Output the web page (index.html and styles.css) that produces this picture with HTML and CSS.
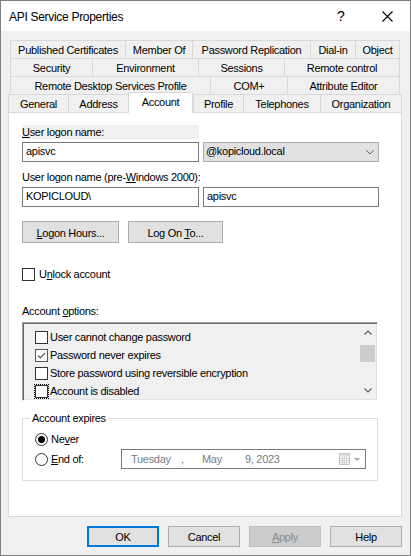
FILE: index.html
```html
<!DOCTYPE html>
<html>
<head>
<meta charset="utf-8">
<link rel="stylesheet" href="styles.css">
</head>
<body>
<div class="window">
  <div class="titlebar">
    <span class="title">API Service Properties</span>
    <span class="help">?</span>
    <span class="close"><svg width="11" height="11" viewBox="0 0 11 11"><path d="M0.5 0.5 L10.5 10.5 M10.5 0.5 L0.5 10.5" stroke="#000" stroke-width="1.1" fill="none"/></svg></span>
  </div>
  <div class="client">
    <div class="tabs">
      <div class="tabrow r1">
        <div class="tab">Published Certificates</div>
        <div class="tab">Member Of</div>
        <div class="tab">Password Replication</div>
        <div class="tab">Dial-in</div>
        <div class="tab">Object</div>
      </div>
      <div class="tabrow r2">
        <div class="tab">Security</div>
        <div class="tab">Environment</div>
        <div class="tab">Sessions</div>
        <div class="tab">Remote control</div>
      </div>
      <div class="tabrow r3">
        <div class="tab">Remote Desktop Services Profile</div>
        <div class="tab">COM+</div>
        <div class="tab">Attribute Editor</div>
      </div>
      <div class="tabrow r4">
        <div class="tab">General</div>
        <div class="tab">Address</div>
        <div class="tab active">Account</div>
        <div class="tab">Profile</div>
        <div class="tab">Telephones</div>
        <div class="tab">Organization</div>
      </div>
    </div>
    <div class="panel">
      <div class="lbl-bar"><u>U</u>ser logon name:</div>
      <div class="field-row">
        <div class="input w177">apisvc</div>
        <div class="combo">
          <span>@kopicloud.local</span>
          <svg class="chev" width="8" height="5" viewBox="0 0 8 5"><polyline points="0.5,0.5 4,4 7.5,0.5" fill="none" stroke="#606060" stroke-width="1"/></svg>
        </div>
      </div>
      <div class="lbl">User logon name (pre-<u>W</u>indows 2000):</div>
      <div class="field-row">
        <div class="input w177">KOPICLOUD\</div>
        <div class="input w176">apisvc</div>
      </div>
      <div class="btn-row">
        <div class="btn b-hours"><span><u>L</u>ogon Hours...</span></div>
        <div class="btn b-logon"><span>Log On <u>T</u>o...</span></div>
      </div>
      <div class="check-row">
        <span class="cb"></span>
        <span>U<u>n</u>lock account</span>
      </div>
      <div class="lbl-opts">Account <u>o</u>ptions:</div>
      <div class="listbox">
        <div class="items">
          <div class="li"><span class="cb"></span><span>User cannot change password</span></div>
          <div class="li"><span class="cb checked"><svg width="11" height="11" viewBox="0 0 11 11"><polyline points="2,5.5 4.3,7.8 9,3" fill="none" stroke="#555" stroke-width="1.2"/></svg></span><span>Password never expires</span></div>
          <div class="li"><span class="cb"></span><span>Store password using reversible encryption</span></div>
          <div class="li"><span class="cb focus"></span><span>Account is disabled</span></div>
        </div>
        <div class="sb">
          <div class="sb-btn"><svg width="8" height="5" viewBox="0 0 8 5"><polyline points="0.5,4.5 4,1 7.5,4.5" fill="none" stroke="#606060" stroke-width="1.2"/></svg></div>
          <div class="sb-track"><div class="thumb"></div></div>
          <div class="sb-btn"><svg width="8" height="5" viewBox="0 0 8 5"><polyline points="0.5,0.5 4,4 7.5,0.5" fill="none" stroke="#606060" stroke-width="1.2"/></svg></div>
        </div>
      </div>
      <fieldset class="group">
        <legend>Account expires</legend>
        <div class="radio-row">
          <span class="radio"><span class="dot"></span></span>
          <span>Ne<u>v</u>er</span>
        </div>
        <div class="radio-row end">
          <div class="end-label">
            <span class="radio"></span>
            <span><u>E</u>nd of:</span>
          </div>
          <div class="dtp">
            <span>Tuesday</span>
            <span>,</span>
            <span>May</span>
            <span>9, 2023</span>
            <svg class="cal" width="22" height="14" viewBox="0 0 22 14">
              <rect x="0.5" y="1.5" width="10" height="11" fill="#f6f6f6" stroke="#c4c4c4"/>
              <rect x="1" y="2" width="9" height="2" fill="#dedede"/>
              <path d="M1 6.5 H10 M1 8.5 H10 M1 10.5 H10 M3.5 4 V12 M5.5 4 V12 M7.5 4 V12" stroke="#d6d6d6" stroke-width="1"/>
              <polygon points="15,6 21,6 18,9" fill="#a8a8a8"/>
            </svg>
          </div>
        </div>
      </fieldset>
    </div>
    <div class="footer">
      <div class="btn fbtn default">OK</div>
      <div class="btn fbtn">Cancel</div>
      <div class="btn fbtn disabled"><span><u>A</u>pply</span></div>
      <div class="btn fbtn">Help</div>
    </div>
  </div>
</div>
</body>
</html>
```
FILE: styles.css
```css
* { box-sizing: border-box; }

body {
  margin: 0;
  font-family: "Liberation Sans", Arial, sans-serif;
  font-size: 11px;
  letter-spacing: -0.3px;
  color: #000;
}

.window {
  width: 411px;
  height: 556px;
  border: 1px solid #7f7f7f;
  background: #f0f0f0;
  display: flex;
  flex-direction: column;
}

.titlebar {
  height: 30px;
  flex-shrink: 0;
  background: #fff;
  display: flex;
  align-items: center;
}

.title {
  flex: 1;
  margin-left: 8px;
  font-size: 12px;
  padding-top: 1px;
}

.help {
  width: 30px;
  margin-right: 8px;
  text-align: center;
  font-size: 14px;
  letter-spacing: 0;
}

.close {
  width: 46px;
  height: 30px;
  display: flex;
  align-items: center;
  justify-content: center;
}

.client {
  flex: 1;
  padding: 9px 8px 0 7px;
}

.tabrow {
  display: grid;
  height: 18px;
  margin: 0 2px;
}

.r1 { grid-template-columns: 115px 67px 118px 45px 45px; }
.r2 { grid-template-columns: 82px 106px 86px 116px; }
.r3 { grid-template-columns: 200px 77px 113px; }
.r4 { grid-template-columns: 60px 60px 65px 50px 77px 82px; margin: 0; }

.tab {
  border-top: 1px solid #d9d9d9;
  border-left: 1px solid #d9d9d9;
  padding-top: 1px;
  line-height: 16px;
  text-align: center;
  white-space: nowrap;
  overflow: hidden;
}

.tab:last-child { border-right: 1px solid #d9d9d9; }

.tab.active {
  background: #fff;
  margin-top: -2px;
  margin-bottom: -1px;
  border-right: 1px solid #d9d9d9;
  position: relative;
  z-index: 1;
}

.panel {
  height: 405px;
  background: #fff;
  border: 1px solid #d9d9d9;
  padding-left: 13px;
}

.lbl-bar {
  margin-top: 12px;
  width: 177px;
  height: 14px;
  line-height: 14px;
  background: #f0f0f0;
}

.field-row {
  display: flex;
  gap: 4px;
  margin-top: 3px;
}

.input {
  height: 20px;
  border: 1px solid #7a7a7a;
  background: #fff;
  line-height: 16px;
  padding: 0 3px;
  white-space: nowrap;
}

.w177 { width: 177px; }
.w176 { width: 176px; }

.combo {
  width: 176px;
  height: 20px;
  border: 1px solid #adadad;
  background: #e1e1e1;
  line-height: 16px;
  padding: 0 4px 0 2px;
  display: flex;
  justify-content: space-between;
}

.chev { align-self: center; }

.lbl {
  margin-top: 8px;
  line-height: 14px;
}

.btn-row {
  display: flex;
  gap: 9px;
  margin-top: 14px;
}

.btn {
  height: 22px;
  background: #e1e1e1;
  border: 1px solid #adadad;
  display: flex;
  align-items: center;
  justify-content: center;
  line-height: 14px;
  padding-top: 1px;
}

.b-hours { width: 97px; }
.b-logon { width: 95px; }

.check-row {
  display: flex;
  align-items: center;
  gap: 4px;
  height: 14px;
  margin-top: 24px;
  line-height: 14px;
}

.cb {
  width: 13px;
  height: 13px;
  flex-shrink: 0;
  border: 1px solid #333;
  background: #fff;
  display: flex;
  align-items: center;
  justify-content: center;
}

.cb.checked { border-color: #555; }

.cb.focus {
  outline: 1px dotted #000;
  outline-offset: 0;
}

.lbl-opts {
  margin-top: 23px;
  line-height: 14px;
}

.listbox {
  margin-top: 4px;
  width: 356px;
  height: 79px;
  border: 1px solid;
  border-color: #a0a0a0 #fff #fff #a0a0a0;
  box-shadow: inset 1px 1px 0 #696969, inset -1px -1px 0 #e3e3e3;
  background: #f0f0f0;
  padding: 1px;
  display: flex;
}

.items {
  flex: 1;
  padding-top: 4px;
}

.li {
  height: 18px;
  display: flex;
  align-items: center;
  gap: 2px;
  padding-left: 11px;
  line-height: 14px;
  white-space: nowrap;
}

.sb {
  width: 17px;
  display: flex;
  flex-direction: column;
}

.sb-btn {
  height: 17px;
  display: flex;
  align-items: center;
  justify-content: center;
}

.sb-track { flex: 1; }

.thumb {
  height: 17px;
  margin: 4px 1px 0 1px;
  background: #cdcdcd;
}

.group {
  margin: 10px 0 0 0;
  width: 356px;
  border: 1px solid #dcdcdc;
  padding: 7px 0 11px 7px;
  min-inline-size: 0;
}

.group legend {
  padding: 0 2px;
  line-height: 14px;
}

.radio-row {
  display: flex;
  align-items: center;
  gap: 3px;
  height: 14px;
  line-height: 14px;
  padding-left: 5px;
}

.radio-row.end {
  height: 20px;
  margin-top: 3px;
  gap: 0;
}

.end-label {
  width: 86px;
  display: flex;
  align-items: center;
  gap: 3px;
}

.radio {
  width: 13px;
  height: 13px;
  flex-shrink: 0;
  border: 1px solid #333;
  border-radius: 50%;
  background: #fff;
  display: flex;
  align-items: center;
  justify-content: center;
}

.dot {
  width: 7px;
  height: 7px;
  border-radius: 50%;
  background: #000;
}

.dtp {
  width: 245px;
  height: 20px;
  border: 1px solid #7a7a7a;
  background: #fff;
  color: #767d86;
  display: grid;
  grid-template-columns: 50px 21px 43px 1fr 22px;
  align-items: center;
  padding: 0 4px 0 9px;
}

.cal { display: block; }

.footer {
  display: flex;
  justify-content: flex-end;
  gap: 9px;
  margin-top: 9px;
}

.fbtn {
  width: 72px;
  height: 21px;
  padding-top: 0;
}

.fbtn.default {
  border: 2px solid #0078d7;
}

.fbtn.disabled {
  background: #cccccc;
  border-color: #bfbfbf;
  color: #8a8a8a;
}
```
